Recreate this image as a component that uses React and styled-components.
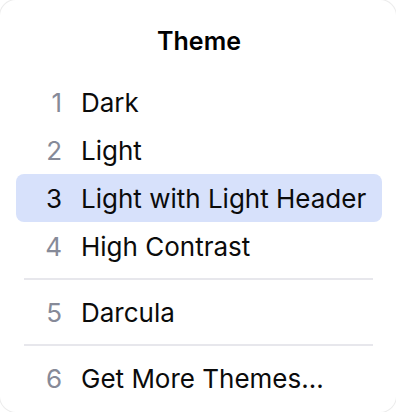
import React from 'react'
import styled, { createGlobalStyle } from 'styled-components'

const GlobalStyle = createGlobalStyle`
    html, body {
        margin: 0;
        padding: 0;
        background: #ffffff;
    }
    body {
        font-family: Inter, 'Noto Sans', sans-serif;
        -webkit-font-smoothing: antialiased;
    }
`

const StyledPopup = styled.section`
    box-sizing: border-box;
    width: 396px;
    height: 412px;
    padding: 0 14px 0 16px;
    background: #ffffff;
    border-radius: 16px;
    box-shadow: 0 0 0 1px #ececec;
    overflow: hidden;
`

const StyledTitle = styled.h2`
    margin: 0;
    height: 78px;
    padding-top: 25px;
    box-sizing: border-box;
    text-align: center;
    font-size: 25px;
    font-weight: 600;
    line-height: 32px;
    color: #000000;
`

const StyledList = styled.ul`
    list-style: none;
    margin: 0;
    padding: 0;
`

const StyledItem = styled.li`
    display: flex;
    align-items: center;
    height: 48px;
    padding-left: 26px;
    border-radius: 8px;
    background: ${(props) => (props.$active ? '#d7e1fb' : 'transparent')};
    font-size: 26px;
    color: #0b0b0b;
`

const StyledNumber = styled.span`
    width: 20px;
    margin-right: 19px;
    text-align: right;
    color: ${(props) => (props.$active ? '#0b0b0b' : '#868a98')};
`

const StyledSeparator = styled.li`
    height: 2px;
    margin: 8px 9px 8px 8px;
    background: #e7e7ec;
`

const themes = [
    { n: 1, label: 'Dark' },
    { n: 2, label: 'Light' },
    { n: 3, label: 'Light with Light Header', active: true },
    { n: 4, label: 'High Contrast' },
    'sep',
    { n: 5, label: 'Darcula' },
    'sep',
    { n: 6, label: 'Get More Themes...' },
]

export default function App() {
    return (
        <>
            <GlobalStyle />
            <StyledPopup>
                <StyledTitle>Theme</StyledTitle>
                <StyledList>
                    {themes.map((t, i) =>
                        t === 'sep' ? (
                            <StyledSeparator key={i} />
                        ) : (
                            <StyledItem key={i} $active={t.active}>
                                <StyledNumber $active={t.active}>{t.n}</StyledNumber>
                                {t.label}
                            </StyledItem>
                        )
                    )}
                </StyledList>
            </StyledPopup>
        </>
    )
}
